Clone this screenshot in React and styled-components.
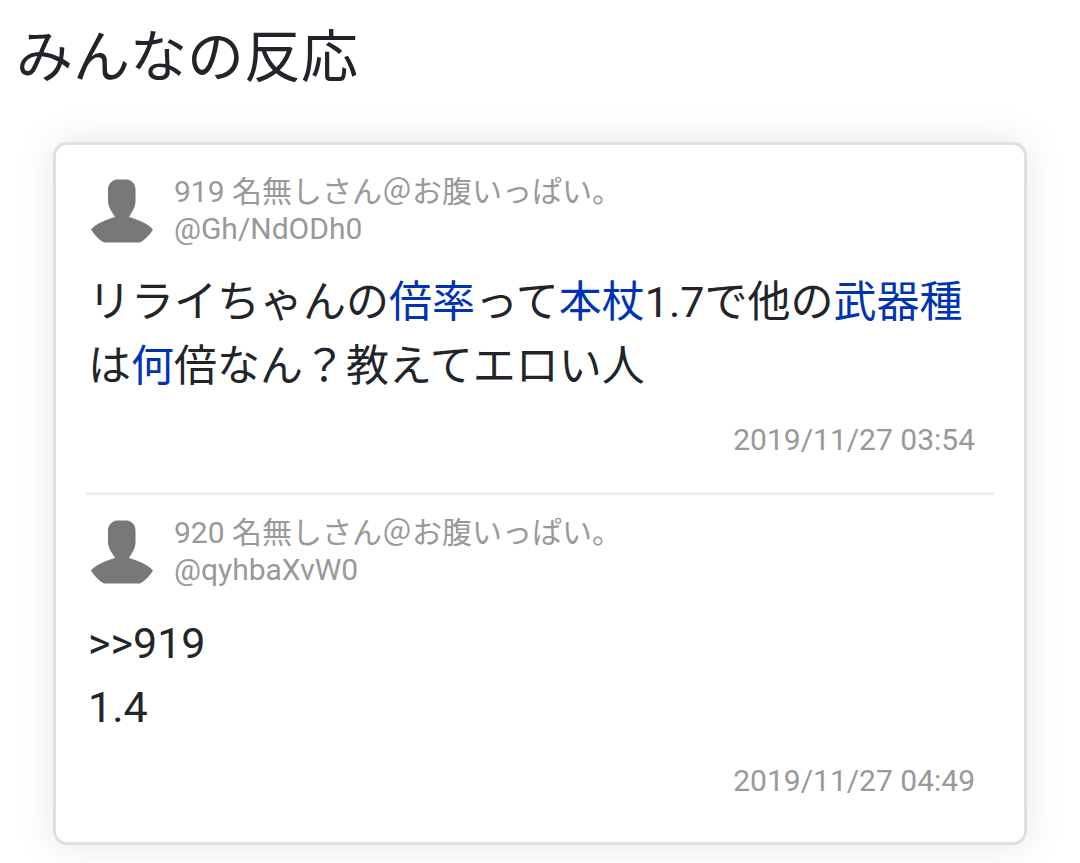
import React from "react";
import styled, { createGlobalStyle } from "styled-components";

const GlobalStyle = createGlobalStyle`
  * { box-sizing: border-box; }
  body {
    margin: 0;
    background: #fff;
    color: #212529;
    font-family: Roboto, "Noto Sans CJK JP", sans-serif;
  }
`;

const Page = styled.main`
  padding: 12px 16px 18px;
`;

const Title = styled.h1`
  margin: 0 0 38px;
  font-size: 57px;
  font-weight: 400;
  line-height: 92px;
`;

const Card = styled.section`
  margin: 0 37px;
  padding: 28px 30px 9px;
  border: 3px solid #dedfe0;
  border-radius: 14px;
  background: #fff;
  box-shadow: 0 0 40px rgba(0, 0, 0, 0.1);
`;

const Post = styled.article`
  padding-bottom: 34px;
  & + & {
    border-top: 3px solid #eeeeee;
    padding-top: 19px;
  }
`;

const PostHeader = styled.header`
  display: flex;
  align-items: center;
  gap: 20px;
  padding-left: 4px;
`;

const Avatar = styled.svg`
  flex: none;
  width: 64px;
  height: 65px;
`;

const Author = styled.div`
  color: #999;
  font-size: 30px;
  line-height: 37px;
`;

const Body = styled.p`
  margin: 23px 0 24px;
  padding: 0 2px;
  font-size: 43px;
  line-height: 64px;
`;

const Keyword = styled.a`
  color: #0033b3;
  text-decoration: none;
`;

const Time = styled.time`
  display: block;
  padding-right: 19px;
  color: #999;
  font-size: 30px;
  line-height: 36px;
  text-align: right;
`;

function Person() {
  return (
    <Avatar viewBox="0 0 64 65" aria-hidden="true">
      <path
        fill="#787878"
        d="M27 1.500H36.500C42 2 45.500 6 45.500 11.500V23C45.500 29 42 34 39 39C48 41.500 57.500 45.500 63 51.500C60 56.500 55.500 61.500 50 64.500H14C8.500 61.500 4 56.500 1 51.500C6.500 45.500 16 41.500 25 39C22 34 18 29 18 23V11.500C18 6 22 2 27 1.500Z"
      />
    </Avatar>
  );
}

function Comment({ name, id, time, children }) {
  return (
    <Post>
      <PostHeader>
        <Person />
        <Author>
          <div>{name}</div>
          <div>{id}</div>
        </Author>
      </PostHeader>
      <Body>{children}</Body>
      <Time>{time}</Time>
    </Post>
  );
}

export default function App() {
  return (
    <>
      <GlobalStyle />
      <Page lang="ja">
        <Title>みんなの反応</Title>
        <Card>
          <Comment name="919 名無しさん＠お腹いっぱい。" id="@Gh/NdODh0" time="2019/11/27 03:54">
            リライちゃんの<Keyword href="#bairitsu">倍率</Keyword>って
            <Keyword href="#honjo">本杖</Keyword>1.7で他の
            <Keyword href="#bukishu">武器種</Keyword>は
            <Keyword href="#nani">何</Keyword>倍なん？教えてエロい人
          </Comment>
          <Comment name="920 名無しさん＠お腹いっぱい。" id="@qyhbaXvW0" time="2019/11/27 04:49">
            &gt;&gt;919
            <br />
            1.4
          </Comment>
        </Card>
      </Page>
    </>
  );
}
